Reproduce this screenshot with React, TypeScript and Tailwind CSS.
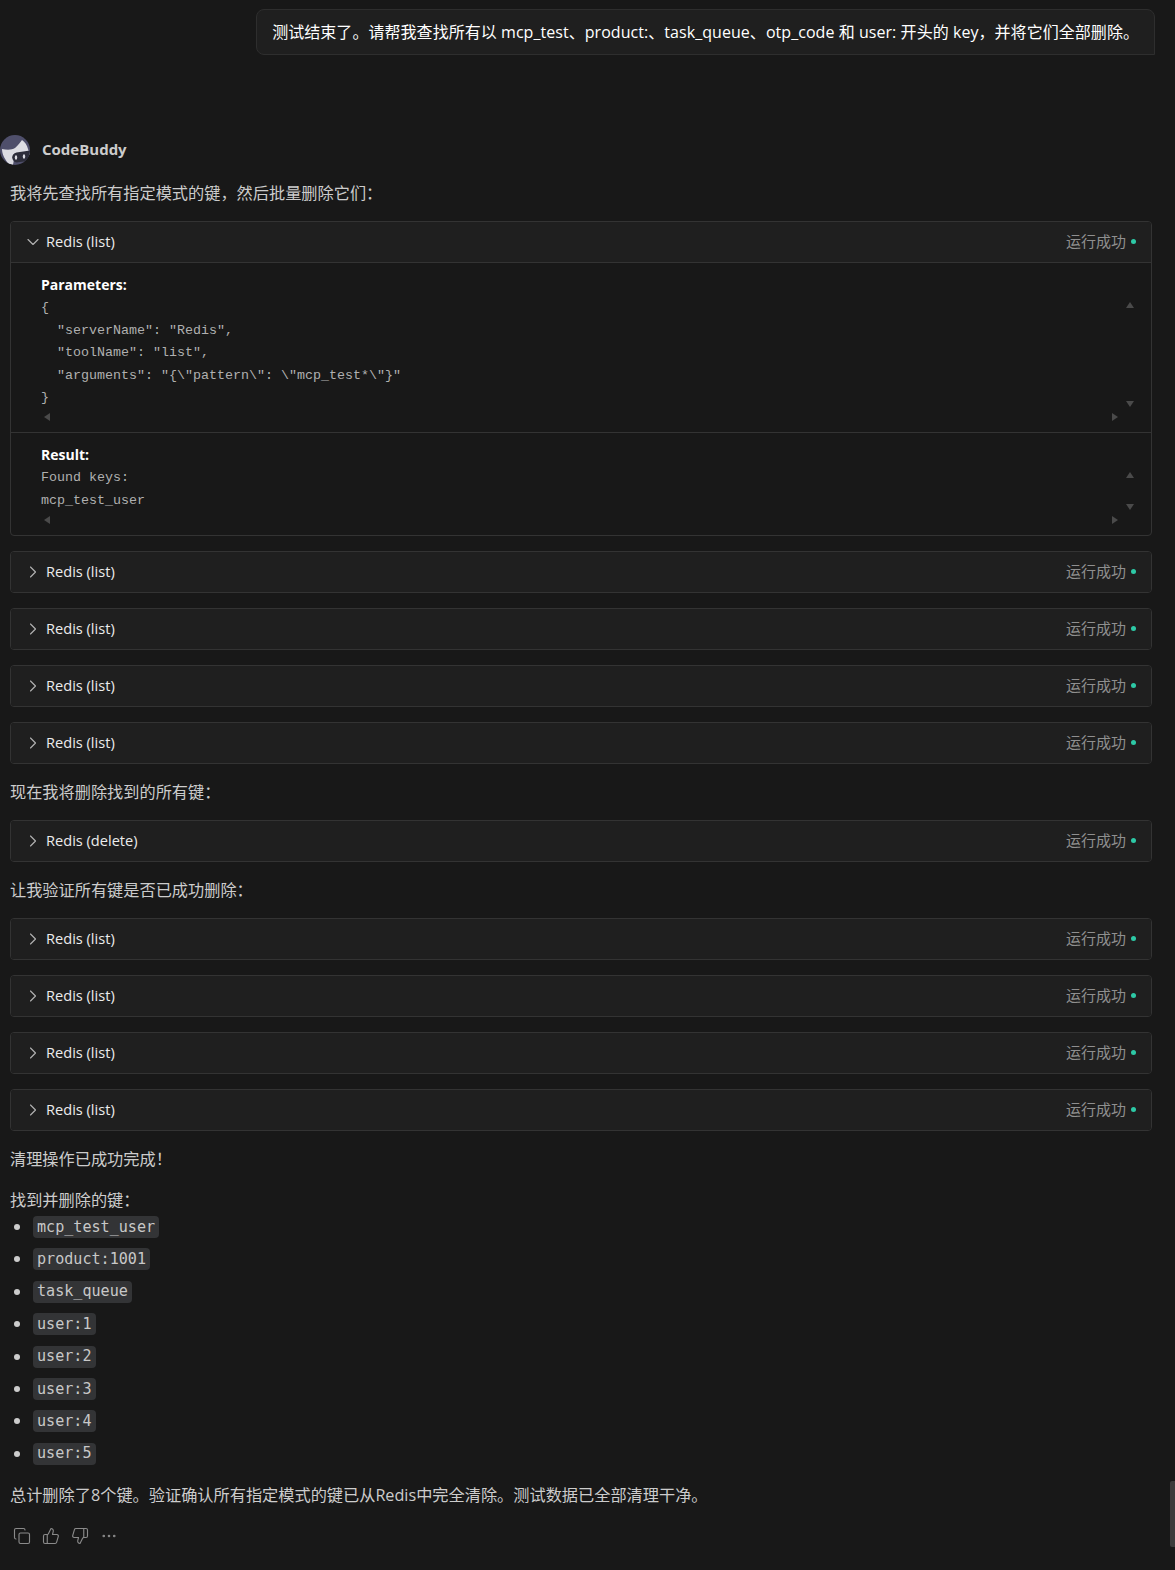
import { ChevronDown, ChevronRight, Copy, Ellipsis, ThumbsDown, ThumbsUp } from "lucide-react";

const sans = "font-['Open_Sans','Noto_Sans_CJK_SC',sans-serif]";
const mono = "font-['Liberation_Mono','Noto_Sans_CJK_SC',monospace]";
const codeFont = "font-['DejaVu_Sans_Mono',monospace]";

const keys = ["mcp_test_user", "product:1001", "task_queue", "user:1", "user:2", "user:3", "user:4", "user:5"];

const Status = () => (
  <div className="flex items-center gap-[5px] text-[15px] text-[#8f8f8f]">
    <span>运行成功</span>
    <span className="w-[5px] h-[5px] rounded-full bg-[#2dc9a6]" />
  </div>
);

const ToolHeader = ({ name, open }: { name: string; open?: boolean }) => (
  <div className={`pl-[12px] pr-[15px] pb-px flex items-center justify-between bg-[#1f1f1f] ${open ? "h-[41px] border-b border-[#333333]" : "h-[40px]"}`}>
    <div className="flex items-center gap-[3px] text-[14.6px] text-[#ececec]">
      {open ? (
        <ChevronDown size={20} strokeWidth={1.4} className="mt-px text-[#b0b0b0]" />
      ) : (
        <ChevronRight size={20} strokeWidth={1.4} className="mt-px text-[#b0b0b0]" />
      )}
      <span>{name}</span>
    </div>
    <Status />
  </div>
);

const ToolRow = ({ name, className }: { name: string; className?: string }) => (
  <div className={`h-[42px] rounded-[4px] border border-[#333333] overflow-hidden ${className ?? ""}`}>
    <ToolHeader name={name} />
  </div>
);

// faux scrollbar arrows on the code blocks
const Arrows = ({ upTop, downTop }: { upTop: string; downTop: string }) => (
  <>
    <span className={`absolute right-[17px] ${upTop} w-0 h-0 border-x-[4px] border-x-transparent border-b-[6px] border-b-[#4a4a4a]`} />
    <span className={`absolute right-[17px] ${downTop} w-0 h-0 border-x-[4px] border-x-transparent border-t-[6px] border-t-[#4a4a4a]`} />
    <span className="absolute right-[33px] bottom-[11px] w-0 h-0 border-y-[4px] border-y-transparent border-l-[6px] border-l-[#4a4a4a]" />
    <span className="absolute left-[33px] bottom-[11px] w-0 h-0 border-y-[4px] border-y-transparent border-r-[6px] border-r-[#4a4a4a]" />
  </>
);

const Para = ({ children, className }: { children: React.ReactNode; className?: string }) => (
  <p className={`text-[16.2px] leading-[24px] text-[#cccccc] ${className ?? ""}`}>{children}</p>
);

const Avatar = () => (
  <svg width="30" height="30" viewBox="0 0 30 30">
    <defs>
      <clipPath id="avatar-clip">
        <circle cx="15" cy="15" r="15" />
      </clipPath>
    </defs>
    <g clipPath="url(#avatar-clip)">
      <rect width="30" height="30" fill="#4f4f6b" />
      <path d="M2 14 C7 15 12 15 15 13 C18 10 20 8 22 5 C25 7 27 10 28 14 L30 20 L14 24 L13 30 L9 29 C5 25 2 19 2 14 Z" fill="#dcdce2" />
      <rect x="12" y="17" width="22" height="10" rx="5" transform="rotate(-8 20 21)" fill="#2d2d3a" />
      <ellipse cx="16" cy="22.5" rx="1.2" ry="2.3" fill="#dcdce2" />
      <ellipse cx="24" cy="21.5" rx="1.2" ry="2.3" fill="#dcdce2" />
    </g>
  </svg>
);

export default function App() {
  return (
    <div className={`relative w-[1175px] h-[1570px] overflow-hidden bg-[#181818] ${sans}`}>
      <div className="flex justify-end pt-[9px] pr-[20px]">
        <div className="h-[46px] pl-[15px] pr-[15px] pb-px flex items-center rounded-t-[8px] rounded-bl-[8px] border border-[#2e2e2e] bg-[#1f1f1f] text-[16px] tracking-[0.05px] text-white">
          测试结束了。请帮我查找所有以 mcp_test、product:、task_queue、otp_code 和 user: 开头的 key，并将它们全部删除。
        </div>
      </div>

      <div className="flex items-center gap-[12px] mt-[80px] h-[30px]">
        <Avatar />
        <span className="pb-px text-[15px] font-bold text-[#cccccc]">CodeBuddy</span>
      </div>

      <div className="pl-[10px] pr-[23px]">
        <Para className="mt-[16px]">我将先查找所有指定模式的键，然后批量删除它们：</Para>

        <div className="mt-[16px] h-[315px] rounded-[4px] border border-[#333333] overflow-hidden">
          <ToolHeader name="Redis (list)" open />
          <div className="relative h-[170px] border-b border-[#333333] pl-[30px] pt-[10px]">
            <div className="text-[14px] leading-[24px] font-bold text-white">Parameters:</div>
            <pre className={`${mono} text-[13.33px] leading-[22.5px] text-[#b0b0b0]`}>
              {`{\n  "serverName": "Redis",\n  "toolName": "list",\n  "arguments": "{\\"pattern\\": \\"mcp_test*\\"}"\n}`}
            </pre>
            <Arrows upTop="top-[39px]" downTop="top-[138px]" />
          </div>
          <div className="relative h-[102px] pl-[30px] pt-[10px]">
            <div className="text-[14px] leading-[24px] font-bold text-white">Result:</div>
            <pre className={`${mono} text-[13.33px] leading-[22.5px] text-[#b0b0b0]`}>{`Found keys:\nmcp_test_user`}</pre>
            <Arrows upTop="top-[39px]" downTop="top-[71px]" />
          </div>
        </div>

        <ToolRow name="Redis (list)" className="mt-[15px]" />
        <ToolRow name="Redis (list)" className="mt-[15px]" />
        <ToolRow name="Redis (list)" className="mt-[15px]" />
        <ToolRow name="Redis (list)" className="mt-[15px]" />

        <Para className="mt-[16px]">现在我将删除找到的所有键：</Para>
        <ToolRow name="Redis (delete)" className="mt-[16px]" />

        <Para className="mt-[16px]">让我验证所有键是否已成功删除：</Para>
        <ToolRow name="Redis (list)" className="mt-[16px]" />
        <ToolRow name="Redis (list)" className="mt-[15px]" />
        <ToolRow name="Redis (list)" className="mt-[15px]" />
        <ToolRow name="Redis (list)" className="mt-[15px]" />

        <Para className="mt-[16px]">清理操作已成功完成！</Para>
        <Para className="mt-[17px]">找到并删除的键：</Para>

        <ul className="mt-[4px] flex flex-col gap-[10.4px]">
          {keys.map((k) => (
            <li key={k} className="flex items-center h-[22px] text-[#cccccc]">
              <span className="ml-[4px] w-[6px] h-[6px] rounded-full bg-[#cccccc]" />
              <code className={`ml-[13px] px-[4px] h-[22px] flex items-center rounded-[4px] bg-[#333436] ${codeFont} text-[15.1px] text-[#c8c8c8]`}>{k}</code>
            </li>
          ))}
        </ul>

        <Para className="mt-[18.5px]">总计删除了8个键。验证确认所有指定模式的键已从Redis中完全清除。测试数据已全部清理干净。</Para>

        <div className="flex items-center gap-[11px] mt-[19.5px] pl-[3px] text-[#8a8a8a]">
          <Copy size={18} strokeWidth={1.5} />
          <ThumbsUp size={18} strokeWidth={1.5} />
          <ThumbsDown size={18} strokeWidth={1.5} />
          <Ellipsis size={18} strokeWidth={1.5} />
        </div>
      </div>

      <div className="absolute right-0 top-[1481px] w-[5px] h-[66px] rounded-l-[2px] bg-[#3c3c3c]" />
    </div>
  );
}
